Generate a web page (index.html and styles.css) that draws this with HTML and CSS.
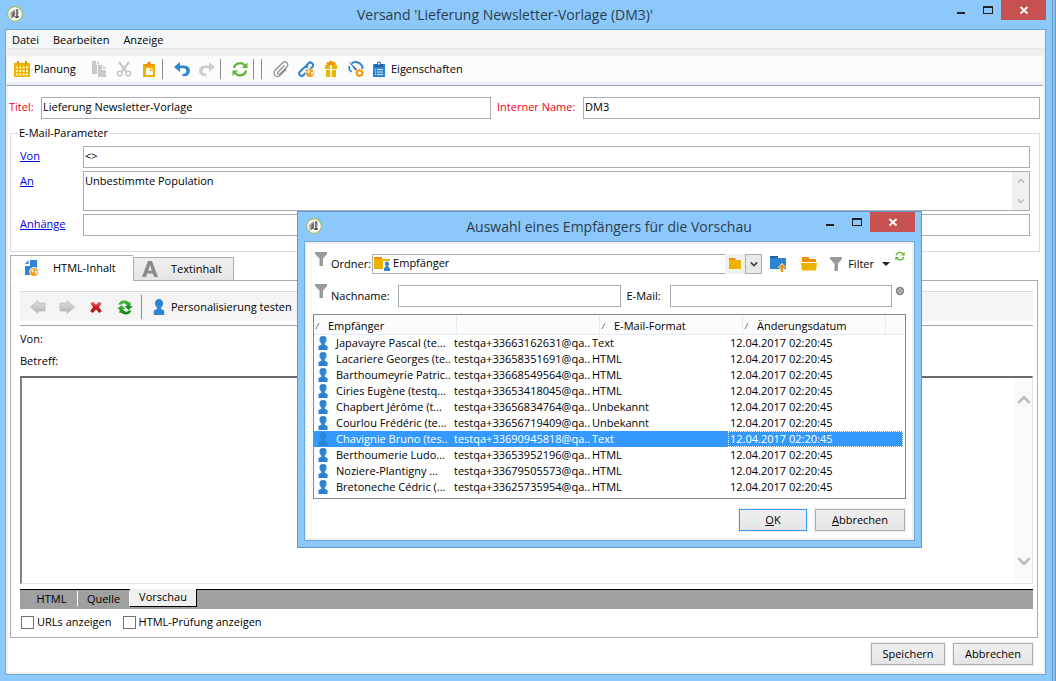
FILE: index.html
```html
<!DOCTYPE html>
<html lang="de">
<head>
<meta charset="utf-8">
<title>Versand 'Lieferung Newsletter-Vorlage (DM3)'</title>
<link rel="stylesheet" href="styles.css">
</head>
<body>
<svg class="sprite" aria-hidden="true">
  <defs>
    <symbol id="app" viewBox="0 0 16 16">
      <circle cx="8" cy="8" r="7.4" fill="#fafaf6" stroke="#9cbf5a" stroke-width="1.1"/>
      <path d="M2.800 7.500L4.500 5.500 7 3.500l1.300.500v5L6 11.500l-1.500 1-1.700-1.500z" fill="#a3a5a2"/>
      <path d="M5.300 12V7.500L7.500 5v5z" fill="#5e615e"/>
      <path d="M3.800 7.500v3.500" stroke="#e4e4e0" stroke-width=".8"/>
      <path d="M10 3v8M7.500 10.500l2.500 1 2-1" fill="none" stroke="#3c3f3c" stroke-width="1.300"/>
      <path d="M11.500 3.500v5" stroke="#c4c6c1" stroke-width="1"/>
    </symbol>
    <symbol id="calendar" viewBox="0 0 16 16">
      <path d="M0 2h3V0h2v2h6V0h2v2h3v14H0z" fill="#edb200"/>
      <path d="M3 0h2v3H3zM11 0h2v3h-2z" fill="#f09000"/>
      <path d="M2 5.500h2v2H2zM5.300 5.500h2v2h-2zM8.700 5.500h2v2h-2zM12 5.500h2v2h-2zM2 9h2v2H2zM5.300 9h2v2h-2zM8.700 9h2v2h-2zM12 9h2v2h-2zM2 12.500h2v2H2zM5.300 12.500h2v2h-2zM8.700 12.500h2v2h-2zM12 12.500h2v2h-2z" fill="#fff3c4"/>
    </symbol>
    <symbol id="copy" viewBox="0 0 16 16">
      <path d="M1 0h4v4h1v9H1z" fill="#c9c9c9"/>
      <path d="M6 0l3 3H6zM7 4h4v5h4v7H7z" fill="#c9c9c9"/>
      <path d="M12 4l4 4h-4z" fill="#d6d6d6"/>
    </symbol>
    <symbol id="cut" viewBox="0 0 16 16">
      <path d="M3 1l7.500 10M13 1L5.500 11" fill="none" stroke="#c9c9c9" stroke-width="2.200"/>
      <circle cx="3.700" cy="12.600" r="2.300" fill="none" stroke="#c9c9c9" stroke-width="1.600"/>
      <circle cx="12.300" cy="12.600" r="2.300" fill="none" stroke="#c9c9c9" stroke-width="1.600"/>
    </symbol>
    <symbol id="paste" viewBox="0 0 16 16">
      <path d="M2 3h12v13H2z" fill="#edb200"/>
      <path d="M4 5V3h2a2 2.300 0 0 1 4 0h2v2z" fill="#f09000"/>
      <path d="M5 7h4v3h3v4H5z" fill="#fff"/><path d="M10 6.800l2.200 2.200H10z" fill="#fff"/>
    </symbol>
    <symbol id="undo" viewBox="0 0 16 16">
      <path d="M0 6l6-5v3.500h4.500a5.400 5.400 0 0 1 0 10.800H8.500v-2.600h1.700a2.800 2.800 0 0 0 0-5.500H6V11z" fill="#2d84d2"/>
    </symbol>
    <symbol id="redo" viewBox="0 0 16 16">
      <path d="M16 6l-6-5v3.500H5.500a5.400 5.400 0 0 0 0 10.800h2v-2.600H5.800a2.800 2.800 0 0 1 0-5.500H10V11z" fill="#cecece"/>
    </symbol>
    <symbol id="refresh" viewBox="0 0 16 16">
      <path d="M2 7a6 5.500 0 0 1 11-2.300M14 9.500a6 5.500 0 0 1-11 2.300" fill="none" stroke="#62b32e" stroke-width="2.200"/>
      <path d="M15.500 1.500V7H9.800zM.500 15V9.500h5.700z" fill="#62b32e"/>
    </symbol>
    <symbol id="clip" viewBox="0 0 16 16">
      <path d="M11.500 4.500L5 11a1.300 1.300 0 0 0 1.900 1.900l7-7a2.900 2.900 0 0 0-4.200-4.200l-7.600 7.600a3.600 3.600 0 0 0 5.100 5.100L13.500 8" fill="none" stroke="#8f8f8f" stroke-width="1.300"/>
    </symbol>
    <symbol id="globe" viewBox="0 0 8 8">
      <circle cx="4" cy="4" r="3.900" fill="#f09a1c"/>
      <path d="M1 2.500L3 1l1.500.700L3.500 3.500 2.700 5zM5 3l2-.500V5L5.500 6.500z" fill="#fff0d0"/>
    </symbol>
    <symbol id="link" viewBox="0 0 16 16">
      <path d="M7.500 5.500l2.800-3a2.600 2.600 0 0 1 4 3.500l-3 3a2.400 2.400 0 0 1-3.300 0" fill="none" stroke="#2d84d2" stroke-width="2"/>
      <path d="M10 6.500a2.600 2.600 0 0 0-3.700 0l-4.500 4.300a2.400 2.400 0 0 0 3.700 3.200l2-2" fill="none" stroke="#2d84d2" stroke-width="2"/>
      <circle cx="12" cy="12" r="4.400" fill="#fcfcfc"/>
      <use href="#globe" x="8" y="8" width="8" height="8"/>
    </symbol>
    <symbol id="gift" viewBox="0 0 16 16">
      <path d="M2 4h12v4H2zM3 9h10v7H3z" fill="#edb200"/>
      <path d="M7 4h2v12H7z" fill="#fff6d6"/><path d="M2 8h12v1H2z" fill="#fff"/>
      <path d="M4 4a1.500 1.500 0 0 1 2-2.500A2 2 0 0 1 10 1.500 1.500 1.500 0 0 1 12 4z" fill="#f09000"/>
    </symbol>
    <symbol id="gauge" viewBox="0 0 16 16">
      <path d="M3.500 2.500A6.800 6.500 0 0 1 14.500 8" fill="none" stroke="#2d84d2" stroke-width="2"/>
      <path d="M0 0l9 8-1.500 1.500z" fill="#2d6cb0"/><path d="M1.300 5v3.500L3.500 11" fill="none" stroke="#2d84d2" stroke-width="1.800"/>
      <path d="M11.500 7.800v8.400M7.300 12h8.400M8.500 9l6 6M14.500 9l-6 6" stroke="#f0960f" stroke-width="1.600"/>
      <circle cx="11.500" cy="12" r="2.600" fill="#fff" stroke="#f0960f" stroke-width="1.800"/>
    </symbol>
    <symbol id="clipboard" viewBox="0 0 16 16">
      <path d="M2 3h12v13H2z" fill="#2d84d2"/>
      <path d="M4 6V3h2a2 2.500 0 0 1 4 0h2v3z" fill="#1d62a8"/><path d="M7 2h2v1.500H7z" fill="#fff"/>
      <path d="M4 8h1v1H4zM6 8h6v1H6zM4 10.500h1v1H4zM6 10.500h6v1H6zM4 13h1v1H4zM6 13h6v1H6z" fill="#d8eafa"/>
    </symbol>
    <symbol id="htmlpage" viewBox="0 0 16 16">
      <path d="M5 0h8v15H1V5h4z" fill="#2d84d2"/>
      <path d="M5.500 0v5.500H1" fill="none" stroke="#fff" stroke-width="1"/>
      <path d="M1 4l3.500-4v4z" fill="#2d84d2"/>
      <circle cx="10" cy="11.800" r="4.800" fill="#fff"/>
      <use href="#globe" x="6" y="8" width="8" height="8"/>
    </symbol>
    <symbol id="lettera" viewBox="0 0 16 16">
      <path d="M6 0h4l6 16h-4l-1.200-3.500H5.200L4 16H0zM8 4L6.200 9.700h3.600z" fill="#8b8b8b"/>
    </symbol>
    <linearGradient id="greyfade" x2="0" y2="1"><stop stop-color="#e2e2e2"/><stop offset="1" stop-color="#b2b2b2"/></linearGradient>
    <linearGradient id="redfade" x2="0" y2="1"><stop stop-color="#f07a7a"/><stop offset=".45" stop-color="#cc2020"/><stop offset="1" stop-color="#a81010"/></linearGradient>
    <linearGradient id="greenfade" x2="0" y2="1"><stop stop-color="#4fc040"/><stop offset="1" stop-color="#0a7c0c"/></linearGradient>
    <symbol id="back" viewBox="0 0 16 16">
      <path d="M.500 8L8 1.500V4h7v8H8v2.500z" fill="url(#greyfade)" stroke="#bcbcbc" stroke-width=".8"/>
    </symbol>
    <symbol id="forward" viewBox="0 0 16 16">
      <path d="M15.500 8L8 1.500V4H1v8h7v2.500z" fill="url(#greyfade)" stroke="#bcbcbc" stroke-width=".8"/>
    </symbol>
    <symbol id="stop" viewBox="0 0 16 16">
      <path d="M2.500 4.500L5 2.500l3 3.200 3-3.200 2.500 2L11 8.300l2.800 3.700-2.500 2L8 10.600 4.700 14l-2.500-2L5 8.300z" fill="url(#redfade)"/>
    </symbol>
    <symbol id="reload" viewBox="0 0 16 16">
      <path d="M1.500 5.500C3 .500 9 0 12 3.500L13.500 3v4H16l-4.500 4L7.500 7H10C9 4 6 3.500 4.500 5.500z" fill="url(#greenfade)"/>
      <path d="M14.500 11.500C13 16 7 16.500 4 13.500L2.500 14v-4H0l4.500-4 4 4H6c1 3 4 3.500 5.500 1.500z" fill="url(#greenfade)"/>
    </symbol>
    <symbol id="user" viewBox="0 0 16 16">
      <path d="M8 0a4 4 0 0 1 4 4.200C12 6.500 11 7.500 10 8.500v1.500l3.200 1.500V16H2.800v-4.500L6 10V8.500C5 7.500 4 6.500 4 4.200A4 4 0 0 1 8 0z" fill="#2d84d2"/>
    </symbol>
    <symbol id="funnel" viewBox="0 0 12 14"><path d="M0 0h12v2L8 6.500V14H4.500V6.500L0 2z" fill="#999"/></symbol>
    <symbol id="folderuser" viewBox="0 0 16 16">
      <path d="M0 1h8v2H0z" fill="#f09000"/><path d="M0 3h16v10H0z" fill="#edb200"/>
      <path d="M9 5h7v11H9z" fill="#fff"/>
      <path d="M13 5.500a2.200 2.200 0 0 1 1.200 4v1.500l1.800 1V15h-6v-3l1.700-1V9.500A2.200 2.200 0 0 1 13 5.500z" fill="#2d84d2"/>
    </symbol>
    <symbol id="folder" viewBox="0 0 12 12"><path d="M0 0h6.500v2H0z" fill="#f09000"/><path d="M0 2h12v9H0z" fill="#edb200"/></symbol>
    <symbol id="folderup" viewBox="0 0 16 16">
      <path d="M0 0h8v2H0z" fill="#1d62a8"/><path d="M0 2h16v11H0z" fill="#2d84d2"/>
      <path d="M12 7l4.500 4.800H14V16h-4v-4.200H7.500z" fill="#fff"/><path d="M12 8l3.800 3.800h-2.600V16h-2.400v-4.200H8.200z" fill="#f09000"/>
    </symbol>
    <symbol id="folderopen" viewBox="0 0 16 14"><path d="M1 0h7v2h7v3H1z" fill="#f09000"/><path d="M0 6h16l-1 7.500H1z" fill="#edb200"/></symbol>
    <symbol id="clear" viewBox="0 0 10 10"><circle cx="5" cy="5" r="3.300" fill="#fff" stroke="#8a8582" stroke-width="1.800"/><path d="M3.300 3.300l3.400 3.400M6.700 3.300L3.300 6.700" stroke="#8a8582" stroke-width="1.300"/></symbol>
    <symbol id="min" viewBox="0 0 10 10"><path d="M1 7h8v2H1z" fill="#222"/></symbol>
    <symbol id="max" viewBox="0 0 10 10"><path d="M0 1h10v8H0zM1 3v5h8V3z" fill="#222" fill-rule="evenodd"/></symbol>
    <symbol id="close" viewBox="0 0 10 10"><path d="M1.500 2l7 6.500M8.500 2l-7 6.500" stroke="#fff" stroke-width="1.800"/></symbol>
    <symbol id="up" viewBox="0 0 10 8"><path d="M1 6l4-4 4 4" fill="none" stroke="#bfbfbf" stroke-width="2"/></symbol>
    <symbol id="down" viewBox="0 0 10 8"><path d="M1 2l4 4 4-4" fill="none" stroke="currentColor" stroke-width="2"/></symbol>
    <symbol id="sort" viewBox="0 0 6 8"><path d="M1 7l3-6" stroke="#777" stroke-width="1"/></symbol>
  </defs>
</svg>

<div class="window">
  <header class="titlebar">
    <svg class="icon"><use href="#app"/></svg>
    <h1 class="title">Versand 'Lieferung Newsletter-Vorlage (DM3)'</h1>
    <div class="controls">
      <button class="ctl" aria-label="Minimieren"><svg><use href="#min"/></svg></button>
      <button class="ctl" aria-label="Maximieren"><svg><use href="#max"/></svg></button>
      <button class="ctl ctl-close" aria-label="Schließen"><svg><use href="#close"/></svg></button>
    </div>
  </header>

  <main class="client">
    <nav class="menubar">
      <button>Datei</button><button>Bearbeiten</button><button>Anzeige</button>
    </nav>
    <div class="toolbar">
      <button class="tool-text"><svg class="icon"><use href="#calendar"/></svg>Planung</button>
      <button class="tool" aria-label="Kopieren"><svg class="icon"><use href="#copy"/></svg></button>
      <button class="tool" aria-label="Ausschneiden"><svg class="icon"><use href="#cut"/></svg></button>
      <button class="tool" aria-label="Einfügen"><svg class="icon"><use href="#paste"/></svg></button>
      <span class="sep"></span>
      <button class="tool" aria-label="Rückgängig"><svg class="icon"><use href="#undo"/></svg></button>
      <button class="tool" aria-label="Wiederholen"><svg class="icon"><use href="#redo"/></svg></button>
      <span class="sep"></span>
      <button class="tool" aria-label="Aktualisieren"><svg class="icon"><use href="#refresh"/></svg></button>
      <span class="sep"></span><span class="sep"></span>
      <button class="tool" aria-label="Anhang"><svg class="icon"><use href="#clip"/></svg></button>
      <button class="tool" aria-label="Link"><svg class="icon"><use href="#link"/></svg></button>
      <button class="tool" aria-label="Angebot"><svg class="icon"><use href="#gift"/></svg></button>
      <button class="tool" aria-label="Analyse"><svg class="icon"><use href="#gauge"/></svg></button>
      <button class="tool-text tool-props"><svg class="icon"><use href="#clipboard"/></svg>Eigenschaften</button>
    </div>

    <div class="names">
      <label class="required" for="titel">Titel:</label>
      <input class="field" id="titel" value="Lieferung Newsletter-Vorlage">
      <label class="required" for="intern">Interner Name:</label>
      <input class="field" id="intern" value="DM3">
    </div>

    <fieldset class="params">
      <legend>E-Mail-Parameter</legend>
      <a href="#von">Von</a>
      <input class="field" id="von" aria-label="Von" value="&lt;&gt;">
      <a href="#an">An</a>
      <div class="memo">
        <textarea id="an" aria-label="An">Unbestimmte Population</textarea>
        <div class="rail"><svg><use href="#up"/></svg><svg><use href="#down"/></svg></div>
      </div>
      <a href="#anhang">Anhänge</a>
      <input class="field" id="anhang" aria-label="Anhänge">
    </fieldset>

    <div class="tabs">
      <button class="tab tab-active"><svg class="icon"><use href="#htmlpage"/></svg>HTML-Inhalt</button>
      <button class="tab"><svg class="icon"><use href="#lettera"/></svg>Textinhalt</button>
    </div>
    <section class="panel">
      <div class="subbar">
        <button class="tool" aria-label="Zurück"><svg class="icon"><use href="#back"/></svg></button>
        <button class="tool" aria-label="Vorwärts"><svg class="icon"><use href="#forward"/></svg></button>
        <button class="tool" aria-label="Stopp"><svg class="icon"><use href="#stop"/></svg></button>
        <button class="tool" aria-label="Neu laden"><svg class="icon"><use href="#reload"/></svg></button>
        <span class="sep"></span>
        <button class="tool-text"><svg class="icon"><use href="#user"/></svg>Personalisierung testen</button>
      </div>
      <div class="mailhead">
        <p>Von:</p>
        <p>Betreff:</p>
      </div>
      <div class="preview">
        <div class="rail"><svg><use href="#up"/></svg><svg><use href="#down"/></svg></div>
      </div>
      <div class="views">
        <button class="view">HTML</button><button class="view">Quelle</button><button class="view view-active">Vorschau</button>
      </div>
      <div class="checks">
        <label><input type="checkbox">URLs anzeigen</label>
        <label><input type="checkbox">HTML-Prüfung anzeigen</label>
      </div>
    </section>
    <footer class="actions">
      <button class="btn btn-save">Speichern</button>
      <button class="btn btn-quit">Abbrechen</button>
    </footer>
  </main>
</div>

<div class="dialog" role="dialog" aria-labelledby="dlgtitle">
  <header class="titlebar">
    <svg class="icon"><use href="#app"/></svg>
    <h2 class="title" id="dlgtitle">Auswahl eines Empfängers für die Vorschau</h2>
    <div class="controls">
      <button class="ctl" aria-label="Minimieren"><svg><use href="#min"/></svg></button>
      <button class="ctl" aria-label="Maximieren"><svg><use href="#max"/></svg></button>
      <button class="ctl ctl-close" aria-label="Schließen"><svg><use href="#close"/></svg></button>
    </div>
  </header>
  <div class="dialog-body">
    <div class="filter">
      <svg class="funnel"><use href="#funnel"/></svg>
      <label for="ordner">Ordner:</label>
      <div class="combo">
        <svg class="icon"><use href="#folderuser"/></svg>
        <select id="ordner"><option>Empfänger</option></select>
        <button class="combo-folder" aria-label="Ordner wählen"><svg><use href="#folder"/></svg></button>
        <button class="combo-drop" aria-label="Öffnen"><svg><use href="#down"/></svg></button>
      </div>
      <button class="dtool" aria-label="Übergeordneter Ordner"><svg class="icon"><use href="#folderup"/></svg></button>
      <button class="dtool" aria-label="Ordner öffnen"><svg class="icon"><use href="#folderopen"/></svg></button>
      <button class="dfilter"><svg><use href="#funnel"/></svg>Filter<span class="caret"></span></button>
      <button class="mini" aria-label="Aktualisieren"><svg><use href="#refresh"/></svg></button>
    </div>
    <div class="filter filter-name">
      <svg class="funnel"><use href="#funnel"/></svg>
      <label class="l-name" for="nachname">Nachname:</label>
      <input class="field" id="nachname">
      <label class="l-mail" for="email">E-Mail:</label>
      <input class="field" id="email">
      <button class="mini" aria-label="Leeren"><svg><use href="#clear"/></svg></button>
    </div>
    <table class="list">
      <thead><tr>
        <th><svg><use href="#sort"/></svg>Empfänger</th><th></th><th><svg><use href="#sort"/></svg>E-Mail-Format</th><th><svg><use href="#sort"/></svg>Änderungsdatum</th><th></th>
      </tr></thead>
      <tbody>
        <tr><td><svg><use href="#user"/></svg>Japavayre Pascal (te...</td><td>testqa+33663162631@qa..</td><td>Text</td><td>12.04.2017 02:20:45</td></tr>
        <tr><td><svg><use href="#user"/></svg>Lacariere Georges (te..</td><td>testqa+33658351691@qa..</td><td>HTML</td><td>12.04.2017 02:20:45</td></tr>
        <tr><td><svg><use href="#user"/></svg>Barthoumeyrie Patric..</td><td>testqa+33668549564@qa..</td><td>HTML</td><td>12.04.2017 02:20:45</td></tr>
        <tr><td><svg><use href="#user"/></svg>Ciries Eugène (testq...</td><td>testqa+33653418045@qa..</td><td>HTML</td><td>12.04.2017 02:20:45</td></tr>
        <tr><td><svg><use href="#user"/></svg>Chapbert Jérôme (t...</td><td>testqa+33656834764@qa..</td><td>Unbekannt</td><td>12.04.2017 02:20:45</td></tr>
        <tr><td><svg><use href="#user"/></svg>Courlou Frédéric (te...</td><td>testqa+33656719409@qa..</td><td>Unbekannt</td><td>12.04.2017 02:20:45</td></tr>
        <tr class="selected"><td><svg><use href="#user"/></svg>Chavignie Bruno (tes..</td><td>testqa+33690945818@qa..</td><td>Text</td><td>12.04.2017 02:20:45</td></tr>
        <tr><td><svg><use href="#user"/></svg>Berthoumerie Ludo...</td><td>testqa+33653952196@qa..</td><td>HTML</td><td>12.04.2017 02:20:45</td></tr>
        <tr><td><svg><use href="#user"/></svg>Noziere-Plantigny ...</td><td>testqa+33679505573@qa..</td><td>HTML</td><td>12.04.2017 02:20:45</td></tr>
        <tr><td><svg><use href="#user"/></svg>Bretoneche Cédric (...</td><td>testqa+33625735954@qa..</td><td>HTML</td><td>12.04.2017 02:20:45</td></tr>
      </tbody>
    </table>
    <div class="dialog-actions">
      <button class="btn btn-ok"><u>O</u>K</button>
      <button class="btn btn-cancel"><u>A</u>bbrechen</button>
    </div>
  </div>
</div>
</body>
</html>
```
FILE: styles.css
```css
* { box-sizing: border-box; }

body {
  margin: 0;
  background: #8cc8fa;
  color: #000;
  font: 11px/16px "Open Sans", "Noto Sans", sans-serif;
}

button, input, select, textarea { font: inherit; color: inherit; margin: 0; border-radius: 0; }
button { padding: 0; border: 0; background: none; white-space: nowrap; }
label { white-space: nowrap; }
p { margin: 0; }
svg { display: block; flex: none; }
.sprite { position: absolute; width: 0; height: 0; }
.icon { width: 16px; height: 16px; }

/* Window frames */
.window {
  display: flex;
  flex-direction: column;
  min-height: 100vh;
  margin-right: 3px;
  padding: 0 6px 6px 5px;
  border-right: 1px solid #6397c4;
  box-shadow: 2px 0 #8cc8fa, 3px 0 #6397c4;
}
.titlebar { display: flex; align-items: flex-start; height: 29px; }
.titlebar .icon { margin: 6px 0 0 2px; }
.title {
  flex: 1;
  margin: 0;
  padding-left: 40px;
  font-size: 14px;
  font-weight: 400;
  line-height: 30px;
  text-align: center;
  color: #2b3d4c;
  white-space: nowrap;
}
.controls { display: flex; }
.ctl { display: grid; place-items: center; width: 27px; height: 20px; }
.ctl svg { width: 10px; height: 10px; }
.ctl-close { width: 45px; background: #c75050; }

.client {
  flex: 1;
  display: flex;
  flex-direction: column;
  border: 1px solid #6fa8d6;
  background: #fff;
  box-shadow: inset 0 0 0 2px #f0f0f0;
}
.menubar {
  display: flex;
  gap: 14px;
  height: 19px;
  padding: 0 6px;
  border-bottom: 1px solid #e8e8e8;
  background: #f4f6f8;
  line-height: 20px;
}
.toolbar {
  display: flex;
  align-items: center;
  height: 37px;
  margin: 0 2px 0 1px;
  padding: 0 0 4px 7px;
  border-top: 7px solid #f0f0f0;
  border-bottom: 1px solid #a0a0a0;
  background: linear-gradient(#fcfcfc 26px, #eaf0fa 26px);
}
.tool { display: grid; place-items: center; width: 25px; height: 26px; }
.tool-text { display: flex; align-items: center; gap: 4px; }
.toolbar .tool-text { min-width: 72px; }
.toolbar .tool-props { margin-left: 3px; }
.sep { width: 1px; height: 20px; margin: 0 6px 0 1px; background: #8c8c8c; }

/* Form fields */
.field {
  min-width: 0;
  height: 22px;
  padding: 0 1px 3px;
  border: 1px solid #abadb3;
  background: #fff;
}
.names {
  display: grid;
  grid-template-columns: 26px 450px 80px 1fr;
  column-gap: 6px;
  align-items: center;
  margin: 11px 5px 0 3px;
}
.names label { padding-bottom: 2px; }
.required { color: #f00018; }
.params {
  display: grid;
  grid-template-columns: 57px 1fr;
  gap: 3px 6px;
  margin: 6px 5px 0 4px;
  padding: 5px 9px 15px;
  border: 1px solid #dcdcdc;
}
.params legend { margin-left: -3px; padding: 0 2px; }
.params a { padding-top: 2px; color: #0000e6; }
.memo { display: flex; height: 40px; border: 1px solid #abadb3; }
.memo textarea { flex: 1; padding: 1px; border: 0; resize: none; overflow: hidden; line-height: 16px; }
.rail {
  display: flex;
  flex-direction: column;
  justify-content: space-between;
  align-items: center;
  width: 17px;
  padding: 5px 0;
  background: #f0f0f0;
  color: #bfbfbf;
}
.rail svg { width: 8px; height: 8px; }

/* Content tabs */
.tabs { display: flex; align-items: flex-end; margin: 3px 7px -1px 4px; }
.tab {
  display: flex;
  align-items: center;
  gap: 13px;
  width: 101px;
  height: 24px;
  padding: 0 10px 0 8px;
  border: 1px solid #acacac;
  background: linear-gradient(#f0f0f0, #e5e5e5);
}
.tab-active {
  position: relative;
  z-index: 1;
  width: 123px;
  height: 26px;
  padding: 0 10px 0 13px;
  border-right: 0;
  border-bottom-color: #fff;
  background: #fff;
}
.panel {
  flex: 1;
  display: flex;
  flex-direction: column;
  margin: 0 7px 0 4px;
  padding: 10px 4px 0 9px;
  border: 1px solid #acacac;
}
.subbar {
  display: flex;
  align-items: center;
  height: 35px;
  padding: 0 0 4px 3px;
  border-top: 1px solid #dcdcdc;
  border-bottom: 1px solid #a0a0a0;
  background: linear-gradient(#f4f4f4 29px, #fff 29px);
}
.subbar .tool { width: 29px; }
.subbar .sep { height: 24px; margin: 0 9px 0 2px; }
.mailhead { display: grid; gap: 6px; padding: 5px 0 7px; }
.preview {
  flex: 1;
  display: flex;
  justify-content: flex-end;
  border: 1px solid #e3e3e3;
  border-top: 2px solid #696969;
  border-left: 2px solid #808080;
}
.preview .rail { padding: 16px 0; background: #f9f9f9; }
.preview .rail svg { width: 14px; height: 12px; }
.views {
  display: flex;
  height: 20px;
  margin-top: 5px;
  border-top: 1px solid #000;
  background: #a0a0a0;
}
.view { width: 52px; height: 15px; margin-top: 1px; padding-bottom: 2px; border-right: 1px solid #fff; }
.view:first-child { width: 58px; padding-left: 6px; }
.view-active {
  width: 67px;
  height: 18px;
  margin-top: -1px;
  border-right: 1px solid #000;
  border-bottom: 1px solid #000;
  background: #f0f0f0;
}
.checks { display: flex; gap: 11px; padding: 5px 1px 7px; }
.checks label { display: flex; align-items: center; gap: 3px; }
.checks input { appearance: none; width: 13px; height: 13px; border: 1px solid #707070; background: #fff; }

.actions, .dialog-actions { display: flex; justify-content: flex-end; gap: 8px; }
.actions { padding: 5px 12px 9px; }
.btn {
  height: 22px;
  border: 1px solid #acacac;
  background: linear-gradient(#f0f0f0, #e5e5e5);
  box-shadow: 0 0 0 1px #f0f0f0;
}
.btn-save { width: 74px; }
.btn-quit { width: 80px; }
.btn-ok { width: 68px; border-color: #3399ff; }
.btn-cancel { width: 90px; }

/* Recipient dialog */
.dialog {
  position: absolute;
  left: 297px;
  top: 211px;
  width: 625px;
  padding: 0 6px 6px;
  border: 1px solid #6397c4;
  background: #8cc8fa;
}
.dialog .title { padding-left: 80px; }
.dialog-body {
  display: flex;
  flex-direction: column;
  border: 1px solid #6fa8d6;
  padding: 12px 8px 9px;
  background: #fff;
  box-shadow: inset 0 0 0 2px #f0f0f0;
}
.filter { display: flex; align-items: center; padding: 0 1px 0 2px; }
.filter label { padding-bottom: 1px; }
.funnel { width: 12px; height: 14px; margin: -10px 4px 0 0; }
.combo {
  flex: 1;
  display: flex;
  align-items: center;
  height: 20px;
  margin: 0 8px 0 1px;
  border: 1px solid #abadb3;
}
.combo .icon { margin: 0 0 0 1px; }
.combo select { flex: 1; height: 18px; padding: 0 3px 2px; border: 0; appearance: none; background: none; }
.combo button { display: grid; place-items: center; height: 20px; background: #f0f0f0; }
.combo-folder { width: 20px; }
.combo-folder svg { width: 12px; height: 12px; }
.combo .combo-drop { width: 17px; margin-right: -1px; border: 1px solid #abadb3; background: #e9e9e9; color: #404040; }
.combo-drop svg { width: 8px; height: 8px; }
.dtool { margin-right: 15px; }
.dfilter { display: flex; align-items: center; gap: 6px; margin-left: -2px; }
.dfilter svg { width: 12px; height: 14px; }
.caret { margin-left: 2px; border: 4px solid transparent; border-top-color: #222; border-bottom: 0; }
.mini { margin: -16px 0 0 5px; }
.mini svg { width: 10px; height: 10px; }
.filter-name { margin-top: 11px; }
.filter-name .mini { margin: -10px 0 0 3px; }
.filter-name .field { flex: 1; }
.l-name { width: 67px; }
.l-mail { width: 43px; margin-left: 6px; }
.list {
  display: block;
  margin-top: 7px;
  padding-bottom: 3px;
  border: 1px solid #828790;
}
.list thead, .list tbody { display: block; }
.list tr { display: grid; }
.list thead tr { grid-template-columns: repeat(4, 143px) 1fr; height: 20px; background: #fcfcfc; border-bottom: 1px solid #e3edf7; }
.list th {
  display: flex;
  align-items: center;
  gap: 7px;
  padding: 2px 0 0 1px;
  border-right: 1px solid #e3edf7;
  font-weight: 400;
}
.list th:last-child { border-right: 0; }
.list th svg { width: 6px; height: 8px; }
.list tbody tr { grid-template-columns: repeat(3, 138px) 1fr; margin-right: 2px; }
.list td {
  display: flex;
  align-items: center;
  height: 16px;
  padding: 0 2px;
  white-space: nowrap;
}
.list td svg { width: 14px; height: 14px; margin-right: 6px; }
.selected { background: #3399ff; color: #fff; }
.selected td:last-child { outline: 1px dotted #fff; outline-offset: -1px; }
.dialog-actions { margin-top: 10px; padding-right: 1px; }
```
